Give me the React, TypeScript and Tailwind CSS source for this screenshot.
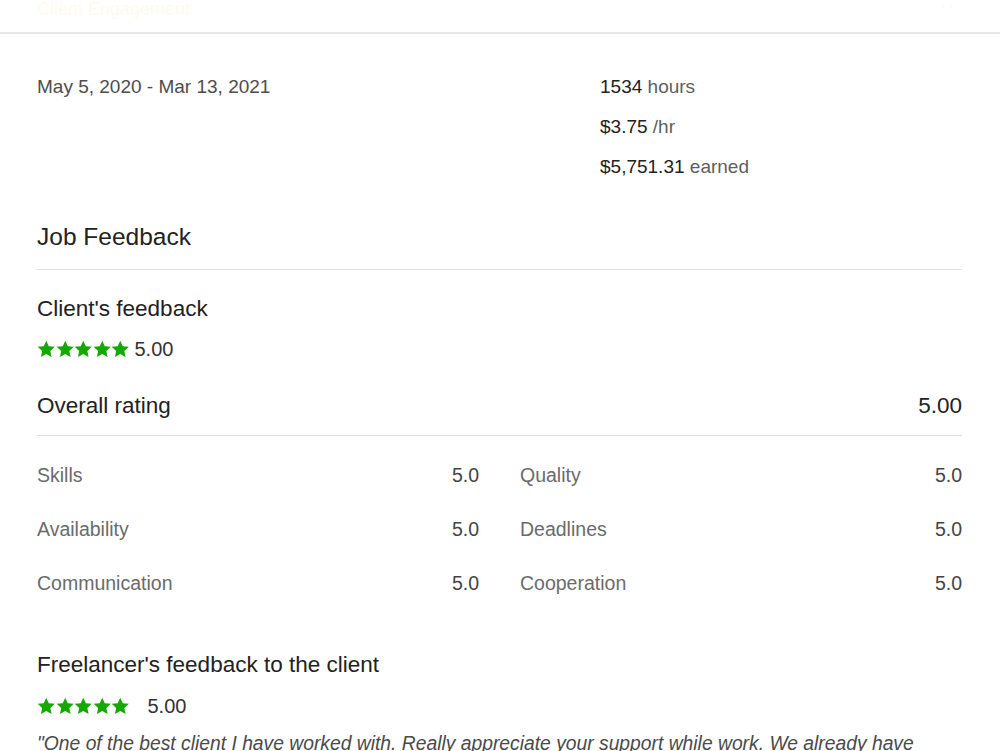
const Stars = () => (
  <div className="flex">
    {[0, 1, 2, 3, 4].map((i) => (
      <svg key={i} width="18.5" height="18.5" viewBox="0 0 24 24" className="fill-[#14a800]">
        <path d="M12 1l3.3 7.1 7.8.8-5.8 5.3 1.6 7.7L12 18l-6.9 3.9 1.6-7.7L.9 8.9l7.8-.8z" />
      </svg>
    ))}
  </div>
);

const App = () => {
  const details = [
    ["Skills", "5.0", "Quality", "5.0"],
    ["Availability", "5.0", "Deadlines", "5.0"],
    ["Communication", "5.0", "Cooperation", "5.0"],
  ];

  return (
    <div className="bg-white min-h-screen w-full font-['Liberation_Sans',Arial,sans-serif] text-[#222] overflow-hidden h-[751px]">
      {/* Faded header */}
      <div className="h-[34px] border-b-2 border-[#e6e6e6] px-[37px] flex items-start justify-between">
        <div className="text-[18px] leading-[18px] text-[#fdfbf0]">Client Engagement</div>
        <div className="text-[12px] leading-[12px] text-[#f2f2f2] mr-[10px]">· ·</div>
      </div>

      <div className="px-[37px] pr-[38px]">
        {/* Dates and totals */}
        <div className="flex pt-[41px]">
          <div className="w-[563px] text-[19px] text-[#4d4d4d] leading-[24px]">May 5, 2020 - Mar 13, 2021</div>
          <div className="flex flex-col gap-[16px] text-[19px] leading-[24px]">
            <div><span className="text-[#222]">1534</span> <span className="text-[#5e5e5e]">hours</span></div>
            <div><span className="text-[#222]">$3.75</span> <span className="text-[#5e5e5e]">/hr</span></div>
            <div><span className="text-[#222]">$5,751.31</span> <span className="text-[#5e5e5e]">earned</span></div>
          </div>
        </div>

        {/* Job feedback */}
        <h2 className="mt-[44px] text-[24.5px] leading-[28px] text-[#222] pb-[18px] border-b border-[#e0e0e0]">Job Feedback</h2>

        <h3 className="mt-[26px] text-[22.5px] leading-[26px] text-[#222]">Client's feedback</h3>
        <div className="flex items-center gap-[5px] mt-[15px]">
          <Stars />
          <span className="text-[20px] text-[#333] leading-[24px]">5.00</span>
        </div>

        <div className="flex justify-between mt-[31px] text-[22.5px] leading-[28px] text-[#222] pb-[15px] border-b border-[#e0e0e0]">
          <span>Overall rating</span>
          <span>5.00</span>
        </div>

        <div className="grid grid-cols-2 gap-x-[41px] gap-y-[30px] mt-[27px] text-[19.5px] leading-[24px]">
          {details.flatMap(([a, av, b, bv]) => [
            <div key={a} className="flex justify-between">
              <span className="text-[#6b6b6b]">{a}</span>
              <span className="text-[#444]">{av}</span>
            </div>,
            <div key={b} className="flex justify-between">
              <span className="text-[#6b6b6b]">{b}</span>
              <span className="text-[#444]">{bv}</span>
            </div>,
          ])}
        </div>

        <h3 className="mt-[57px] text-[22.5px] leading-[26px] text-[#222]">Freelancer's feedback to the client</h3>
        <div className="flex items-center gap-[18px] mt-[16px]">
          <Stars />
          <span className="text-[20px] text-[#333] leading-[24px]">5.00</span>
        </div>
        <p className="mt-[14px] italic text-[19.3px] leading-[24px] text-[#4a4a4a] whitespace-nowrap">
          "One of the best client I have worked with. Really appreciate your support while work. We already have
        </p>
      </div>
    </div>
  );
};

export default App;
